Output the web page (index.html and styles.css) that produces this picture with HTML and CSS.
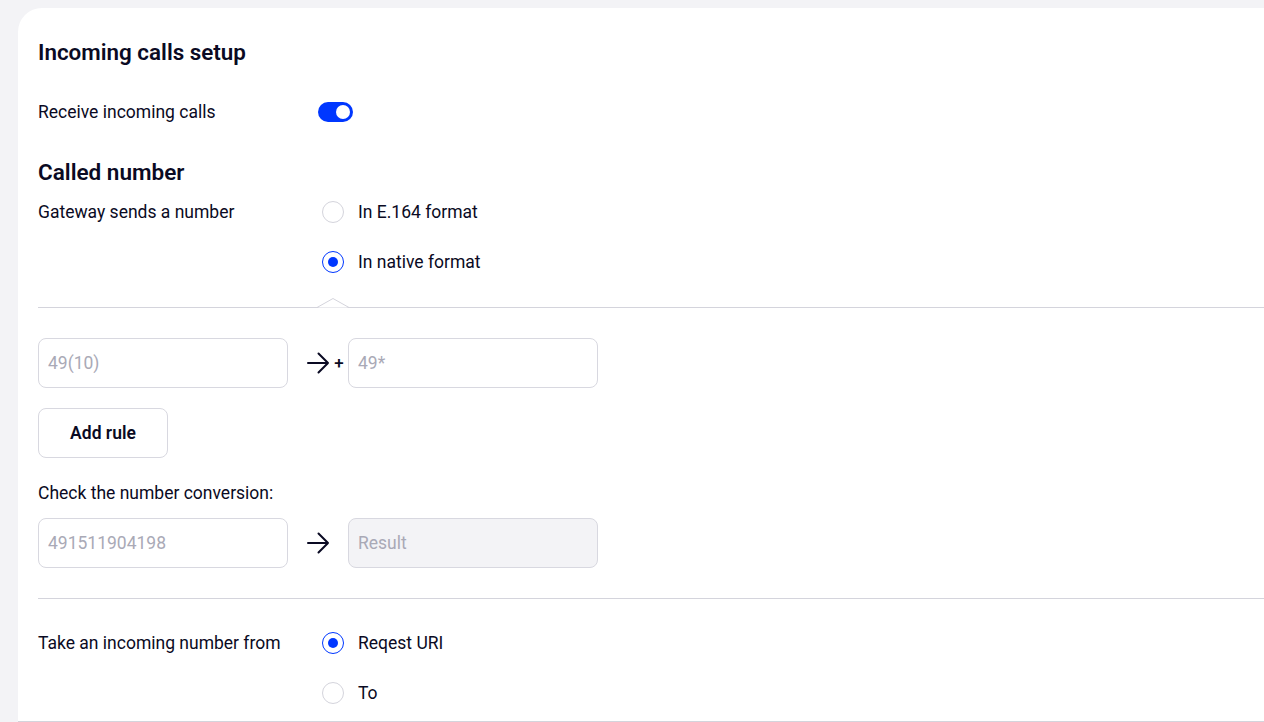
FILE: index.html
```html
<!DOCTYPE html>
<html lang="en">
<head>
    <meta charset="UTF-8">
    <meta name="viewport" content="width=device-width, initial-scale=1.0">
    <title>Incoming calls setup</title>
    <link rel="stylesheet" href="styles.css">
</head>
<body>
    <div class="card">
        <h1 class="title">Incoming calls setup</h1>

        <!-- receive toggle -->
        <div class="row toggle-row">
            <span class="label">Receive incoming calls</span>
            <span class="toggle on"><span class="knob"></span></span>
        </div>

        <h2 class="subtitle">Called number</h2>

        <div class="row radio-row">
            <span class="label">Gateway sends a number</span>
            <div class="options">
                <div class="option"><span class="radio"></span>In E.164 format</div>
                <div class="option"><span class="radio checked"></span>In native format</div>
            </div>
        </div>

        <!-- line with the little notch under the selected option -->
        <div class="divider notched">
            <svg class="notch" width="32" height="10" viewBox="0 0 32 10">
                <polygon points="1,9.5 16,1 31,9.5" fill="#fff"/>
                <polyline points="0,9.5 16,0.5 32,9.5" fill="none" stroke="#d4d4dc" stroke-width="1"/>
            </svg>
        </div>

        <div class="rule-row">
            <input type="text" class="field" placeholder="49(10)">
            <div class="connector">
                <svg class="arrow" width="24" height="24" viewBox="0 0 24 24">
                    <path d="M2 12H22M12.5 2.5L22 12l-9.5 9.5" fill="none" stroke="#0a0a23" stroke-width="2" stroke-linecap="round" stroke-linejoin="round"/>
                </svg>
                <span class="plus">+</span>
            </div>
            <input type="text" class="field" placeholder="49*">
        </div>

        <button class="add-btn">Add rule</button>

        <p class="check-label">Check the number conversion:</p>

        <div class="rule-row check-row">
            <input type="text" class="field" placeholder="491511904198">
            <div class="connector">
                <svg class="arrow" width="24" height="24" viewBox="0 0 24 24">
                    <path d="M2 12H22M12.5 2.5L22 12l-9.5 9.5" fill="none" stroke="#0a0a23" stroke-width="2" stroke-linecap="round" stroke-linejoin="round"/>
                </svg>
            </div>
            <input type="text" class="field result" placeholder="Result" disabled>
        </div>

        <div class="divider"></div>

        <div class="row radio-row take-row">
            <span class="label">Take an incoming number from</span>
            <div class="options">
                <div class="option"><span class="radio checked"></span>Reqest URI</div>
                <div class="option"><span class="radio"></span>To</div>
            </div>
        </div>
    </div>
</body>
</html>
```

FILE: styles.css
```css
html, body {
    margin: 0;
    height: 722px;
    overflow: hidden;
}

body {
    background-color: #f3f3f6;
    font-family: Roboto, "Liberation Sans", sans-serif;
    color: #0a0a23;
    padding: 8px 0 0 18px;
    box-sizing: border-box;
}

.card {
    background-color: #fff;
    border-radius: 24px 0 0 0;
    padding: 29px 0 0 20px;
    height: 714px;
    box-sizing: border-box;
    border-bottom: 1px solid #d4d4dc;
}

.title {
    margin: 0;
    font-size: 22.4px;
    line-height: 30px;
    font-weight: 600;
}

.subtitle {
    margin: 30px 0 0;
    font-size: 22.5px;
    line-height: 30px;
    font-weight: 600;
}

.row {
    display: flex;
    align-items: flex-start;
    font-size: 17.5px;
}

.label {
    width: 280px;
    line-height: 30px;
    flex-shrink: 0;
}

/* toggle switch */
.toggle-row {
    margin-top: 30px;
}

.toggle {
    width: 35px;
    height: 20px;
    margin-top: 5px;
    border-radius: 10px;
    background-color: #0037ff;
    display: flex;
    align-items: center;
    justify-content: flex-end;
    padding: 0 3px;
    box-sizing: border-box;
}

.knob {
    width: 14px;
    height: 14px;
    border-radius: 50%;
    background-color: #fff;
}

/* radios */
.radio-row {
    margin-top: 10px;
}

.options {
    display: flex;
    flex-direction: column;
    gap: 20px;
    padding-left: 4px;
}

.option {
    display: flex;
    align-items: center;
    gap: 14px;
    height: 30px;
    line-height: 30px;
}

.radio {
    width: 22px;
    height: 22px;
    border-radius: 50%;
    border: 1px solid #d4d4dc;
    box-sizing: border-box;
    display: flex;
    align-items: center;
    justify-content: center;
}

.radio.checked {
    border: 1.5px solid #0037ff;
}

.radio.checked::after {
    content: "";
    width: 10px;
    height: 10px;
    border-radius: 50%;
    background-color: #0037ff;
}

.divider {
    height: 1px;
    background-color: #d4d4dc;
    margin-top: 30px;
}

.divider.notched {
    position: relative;
}

.notch {
    position: absolute;
    left: 279px;
    top: -9px;
}

/* number rules */
.rule-row {
    display: flex;
    align-items: center;
    margin-top: 30px;
}

.field {
    width: 250px;
    height: 50px;
    box-sizing: border-box;
    border: 1px solid #d8d8e0;
    border-radius: 8px;
    padding: 0 9px;
    font-family: Roboto, "Liberation Sans", sans-serif;
    font-size: 17.5px;
    color: #0a0a23;
    background-color: #fff;
    outline: none;
}

.field::placeholder {
    color: #a9a9b6;
}

.field.result {
    background-color: #f3f3f6;
}

.connector {
    width: 60px;
    display: flex;
    align-items: center;
    padding-left: 18px;
    box-sizing: border-box;
}

.arrow {
    display: block;
}

.plus {
    width: 18px;
    text-align: center;
    font-size: 17px;
    font-weight: 500;
}

.add-btn {
    display: block;
    margin-top: 20px;
    width: 130px;
    height: 50px;
    border: 1px solid #d8d8e0;
    border-radius: 8px;
    background-color: #fff;
    font-family: Roboto, "Liberation Sans", sans-serif;
    font-size: 17.5px;
    font-weight: 600;
    color: #0a0a23;
    cursor: pointer;
}

.check-label {
    margin: 25px 0 0;
    font-size: 17.5px;
    line-height: 20px;
}

.check-row {
    margin-top: 15px;
}

.take-row {
    margin-top: 29px;
}
```
